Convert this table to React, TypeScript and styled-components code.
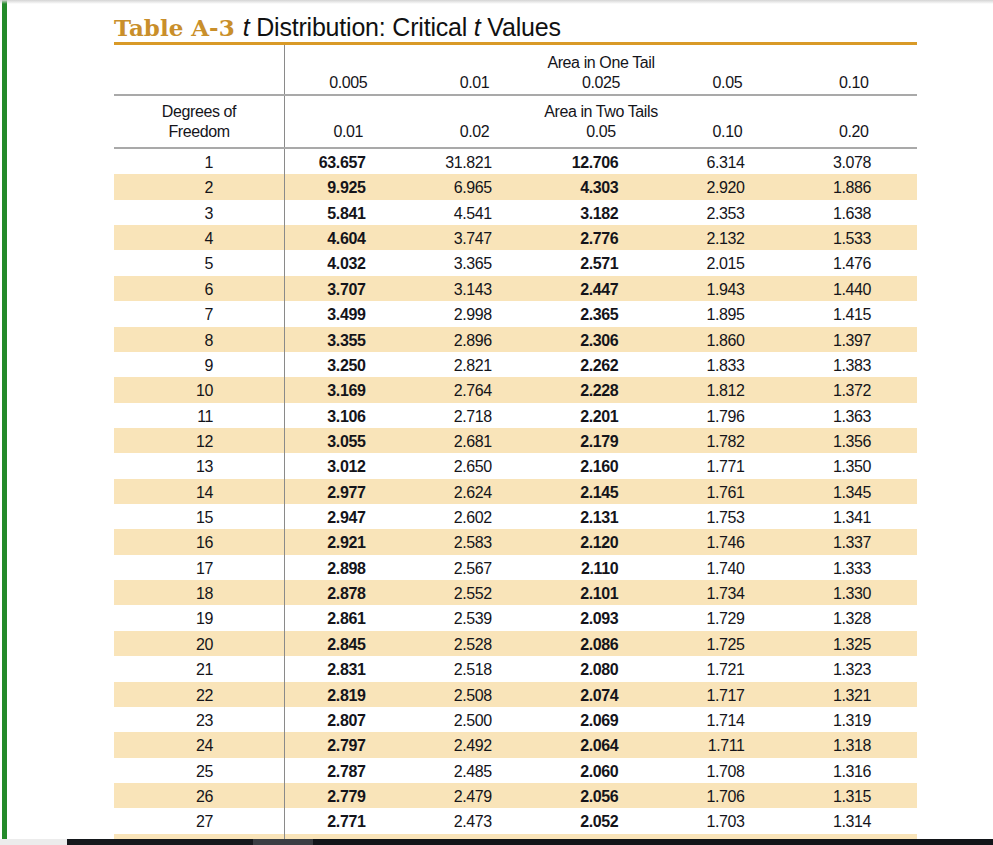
import React from 'react'
import styled, { createGlobalStyle } from 'styled-components'

const GlobalStyle = createGlobalStyle`
  html, body {
    margin: 0;
    padding: 0;
    background: #fff;
    height: 845px;
    overflow: hidden;
  }
`

const NARROW = `"Liberation Sans Narrow", "Arial Narrow", "Liberation Sans", Arial, sans-serif`

const Page = styled.div`
  display: flex;
  align-items: flex-start;
  height: 845px;
`

const GreenBar = styled.div`
  width: 5px;
  height: 839px;
  margin-left: 2px;
  background: #238a2a;
  flex-shrink: 0;
`

const Content = styled.div`
  padding-left: 107px;
`

const Sheet = styled.div`
  width: 803px;
`

const TitleRow = styled.div`
  display: flex;
  align-items: baseline;
  gap: 8px;
  height: 45px;
  box-sizing: border-box;
  padding-top: 13px;
  border-bottom: 3px solid #d99a27;
  line-height: 28px;
`

const TableLabel = styled.span`
  font-family: "DejaVu Serif", "Liberation Serif", serif;
  font-weight: bold;
  font-size: 23px;
  color: #c98f2b;
`

const TitleText = styled.span`
  font-family: "Liberation Sans", Arial, sans-serif;
  font-size: 25px;
  color: #111;
  letter-spacing: -0.2px;
`

const Grid = styled.div<{ $height: number; $shade?: boolean; $line?: boolean }>`
  display: grid;
  grid-template-columns: 171px repeat(5, 1fr);
  height: ${(p) => p.$height}px;
  background: ${(p) => (p.$shade ? '#f9e4b9' : '#fff')};
  border-bottom: ${(p) => (p.$line ? '2px solid #a9a9a9' : 'none')};
  font-family: ${NARROW};
  font-size: 16px;
  letter-spacing: -0.4px;
  color: #14141a;
`

const HeadCell = styled.div<{ $pad: number; $first?: boolean }>`
  display: flex;
  flex-direction: column;
  justify-content: flex-end;
  align-items: center;
  padding-bottom: ${(p) => p.$pad}px;
  line-height: 20px;
  border-right: ${(p) => (p.$first ? '1px solid #8a8a8a' : 'none')};
`

const AreaLabel = styled.div<{ $gap: number }>`
  margin-bottom: ${(p) => p.$gap}px;
`

const DfCell = styled.div`
  text-align: right;
  padding-right: 71px;
  padding-top: 1px;
  border-right: 1px solid #8a8a8a;
  line-height: 26px;
`

const ValueCell = styled.div<{ $bold?: boolean }>`
  text-align: right;
  padding-right: 46px;
  padding-top: 1px;
  line-height: 26px;
  font-weight: ${(p) => (p.$bold ? 'bold' : 'normal')};
`

const BottomBar = styled.div`
  position: fixed;
  left: 0;
  right: 0;
  bottom: 0;
  height: 6px;
  display: flex;
`

const BarPart = styled.div<{ $w?: number; $c: string }>`
  width: ${(p) => (p.$w ? `${p.$w}px` : 'auto')};
  flex: ${(p) => (p.$w ? 'none' : '1')};
  background: ${(p) => p.$c};
`

const TopShade = styled.div`
  position: fixed;
  left: 0;
  right: 0;
  top: 0;
  height: 4px;
  background: linear-gradient(#d4d4d4, rgba(255, 255, 255, 0));
`

const rows: string[][] = [
  ['63.657', '31.821', '12.706', '6.314', '3.078'],
  ['9.925', '6.965', '4.303', '2.920', '1.886'],
  ['5.841', '4.541', '3.182', '2.353', '1.638'],
  ['4.604', '3.747', '2.776', '2.132', '1.533'],
  ['4.032', '3.365', '2.571', '2.015', '1.476'],
  ['3.707', '3.143', '2.447', '1.943', '1.440'],
  ['3.499', '2.998', '2.365', '1.895', '1.415'],
  ['3.355', '2.896', '2.306', '1.860', '1.397'],
  ['3.250', '2.821', '2.262', '1.833', '1.383'],
  ['3.169', '2.764', '2.228', '1.812', '1.372'],
  ['3.106', '2.718', '2.201', '1.796', '1.363'],
  ['3.055', '2.681', '2.179', '1.782', '1.356'],
  ['3.012', '2.650', '2.160', '1.771', '1.350'],
  ['2.977', '2.624', '2.145', '1.761', '1.345'],
  ['2.947', '2.602', '2.131', '1.753', '1.341'],
  ['2.921', '2.583', '2.120', '1.746', '1.337'],
  ['2.898', '2.567', '2.110', '1.740', '1.333'],
  ['2.878', '2.552', '2.101', '1.734', '1.330'],
  ['2.861', '2.539', '2.093', '1.729', '1.328'],
  ['2.845', '2.528', '2.086', '1.725', '1.325'],
  ['2.831', '2.518', '2.080', '1.721', '1.323'],
  ['2.819', '2.508', '2.074', '1.717', '1.321'],
  ['2.807', '2.500', '2.069', '1.714', '1.319'],
  ['2.797', '2.492', '2.064', '1.711', '1.318'],
  ['2.787', '2.485', '2.060', '1.708', '1.316'],
  ['2.779', '2.479', '2.056', '1.706', '1.315'],
  ['2.771', '2.473', '2.052', '1.703', '1.314'],
  ['2.763', '2.467', '2.048', '1.701', '1.313'],
  ['2.756', '2.462', '2.045', '1.699', '1.311'],
]

const oneTail = ['0.005', '0.01', '0.025', '0.05', '0.10']
const twoTails = ['0.01', '0.02', '0.05', '0.10', '0.20']

export default function App() {
  return (
    <>
      <GlobalStyle />
      <TopShade />
      <Page>
        <GreenBar />
        <Content>
          <Sheet>
            <TitleRow>
              <TableLabel>Table A-3</TableLabel>
              <TitleText>
                <i>t</i> Distribution: Critical <i>t</i> Values
              </TitleText>
            </TitleRow>
            <Grid $height={49} $line>
              <HeadCell $pad={1} $first />
              {oneTail.map((v, i) => (
                <HeadCell key={v} $pad={1}>
                  {i === 2 && <AreaLabel $gap={0}>Area in One Tail</AreaLabel>}
                  <div>{v}</div>
                </HeadCell>
              ))}
            </Grid>
            <Grid $height={51} $line>
              <HeadCell $pad={5} $first>
                <div>Degrees of</div>
                <div>Freedom</div>
              </HeadCell>
              {twoTails.map((v, i) => (
                <HeadCell key={i} $pad={5}>
                  {i === 2 && <AreaLabel $gap={0}>Area in Two Tails</AreaLabel>}
                  <div>{v}</div>
                </HeadCell>
              ))}
            </Grid>
            {rows.map((r, i) => (
              <Grid key={i} $height={25.37} $shade={i % 2 === 1}>
                <DfCell>{i + 1}</DfCell>
                {r.map((v, j) => (
                  <ValueCell key={j} $bold={j === 0 || j === 2}>
                    {v}
                  </ValueCell>
                ))}
              </Grid>
            ))}
          </Sheet>
        </Content>
      </Page>
      <BottomBar>
        <BarPart $w={67} $c="#ececec" />
        <BarPart $w={186} $c="#15181c" />
        <BarPart $w={60} $c="#3b3e43" />
        <BarPart $c="#121519" />
      </BottomBar>
    </>
  )
}
